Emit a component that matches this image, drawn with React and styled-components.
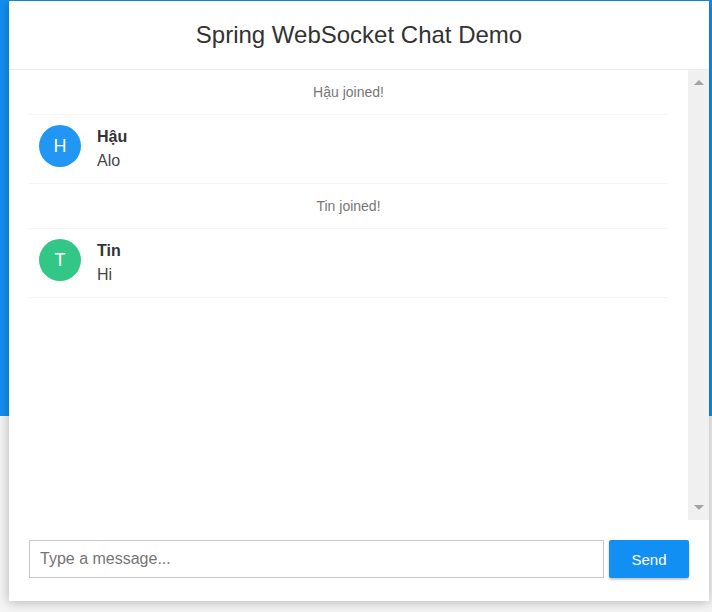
import styled, { createGlobalStyle } from 'styled-components';

const GlobalStyle = createGlobalStyle`
  html, body {
    margin: 0;
    padding: 0;
    height: 100%;
    overflow: hidden;
  }
  body {
    font-family: "Liberation Sans", Arial, sans-serif;
    background: #f4f4f4;
  }
  * {
    box-sizing: border-box;
  }
`;

const Page = styled.div`
  height: 612px;
  padding: 1px 0 0 9px;
  background: linear-gradient(to bottom, #128ff2 416px, #f4f4f4 416px);
`;

const ChatContainer = styled.div`
  width: 700px;
  height: 600px;
  background: #fff;
  box-shadow: 0 1px 11px rgba(0, 0, 0, 0.27);
  display: flex;
  flex-direction: column;
`;

const ChatHeader = styled.div`
  text-align: center;
  padding: 15px;
  border-bottom: 1px solid #ececec;
`;

const Title = styled.h2`
  margin: 0;
  font-size: 24px;
  line-height: 38px;
  font-weight: 400;
  color: #333;
`;

const ScrollPane = styled.div`
  display: flex;
  height: 450px;
`;

const MessageArea = styled.ul`
  flex: 1;
  list-style: none;
  margin: 0;
  padding: 0 20px;
  overflow: hidden;
`;

const ScrollTrack = styled.div`
  width: 21px;
  background: #f0f0f0;
  display: flex;
  flex-direction: column;
  justify-content: space-between;
  align-items: center;
  padding: 10px 0;
`;

const Arrow = styled.span`
  width: 0;
  height: 0;
  border-left: 5px solid transparent;
  border-right: 5px solid transparent;
  ${(p) =>
    p.$down ? 'border-top: 5px solid #a3a3a3;' : 'border-bottom: 5px solid #a3a3a3;'}
`;

const EventItem = styled.li`
  line-height: 24px;
  padding: 10px 20px;
  border-bottom: 1px solid #f4f4f4;
  text-align: center;
  font-size: 14px;
  color: #777;
`;

const ChatItem = styled.li`
  position: relative;
  line-height: 24px;
  padding: 10px 20px 10px 68px;
  border-bottom: 1px solid #f4f4f4;
  font-size: 16px;
`;

const Avatar = styled.i`
  position: absolute;
  left: 10px;
  top: 10px;
  width: 42px;
  height: 42px;
  border-radius: 50%;
  background: ${(p) => p.$color};
  color: #fff;
  font-style: normal;
  font-size: 18px;
  line-height: 42px;
  text-align: center;
  text-transform: uppercase;
`;

const Sender = styled.span`
  display: block;
  color: #333;
  font-weight: 700;
`;

const Text = styled.p`
  margin: 0;
  color: #43464b;
`;

const MessageForm = styled.form`
  padding: 20px;
  display: flex;
  gap: 5px;
`;

const MessageInput = styled.input`
  width: 575px;
  height: 38px;
  padding-left: 10px;
  border: 1px solid #c8c8c8;
  font-family: inherit;
  font-size: 16px;
  color: #333;
  outline: none;

  &::placeholder {
    color: #757575;
  }
`;

const SendButton = styled.button`
  width: 80px;
  height: 38px;
  border: none;
  border-radius: 2px;
  background: #128ff2;
  color: #fff;
  font-family: inherit;
  font-size: 15px;
  box-shadow: 0 2px 2px 0 rgba(0, 0, 0, 0.14), 0 1px 3px 0 rgba(0, 0, 0, 0.12);
  cursor: pointer;
`;

const messages = [
  { type: 'JOIN', sender: 'Hậu' },
  { type: 'CHAT', sender: 'Hậu', content: 'Alo', color: '#2196F3' },
  { type: 'JOIN', sender: 'Tin' },
  { type: 'CHAT', sender: 'Tin', content: 'Hi', color: '#32c787' },
];

const App = () => (
  <Page>
    <GlobalStyle />
    <ChatContainer>
      <ChatHeader>
        <Title>Spring WebSocket Chat Demo</Title>
      </ChatHeader>
      <ScrollPane>
        <MessageArea>
          {messages.map((m, i) =>
            m.type === 'JOIN' ? (
              <EventItem key={i}>{m.sender} joined!</EventItem>
            ) : (
              <ChatItem key={i}>
                <Avatar $color={m.color}>{m.sender[0]}</Avatar>
                <Sender>{m.sender}</Sender>
                <Text>{m.content}</Text>
              </ChatItem>
            )
          )}
        </MessageArea>
        <ScrollTrack>
          <Arrow />
          <Arrow $down />
        </ScrollTrack>
      </ScrollPane>
      <MessageForm onSubmit={(e) => e.preventDefault()}>
        <MessageInput type="text" placeholder="Type a message..." />
        <SendButton type="submit">Send</SendButton>
      </MessageForm>
    </ChatContainer>
  </Page>
);

export default App;
